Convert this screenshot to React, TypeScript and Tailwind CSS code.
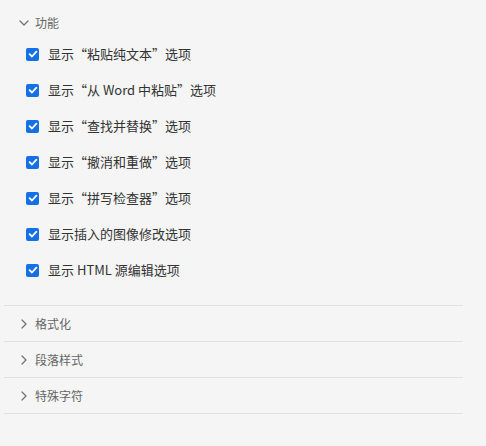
import { ChevronDown, ChevronRight } from 'lucide-react'

const options = [
  '显示“粘贴纯文本”选项',
  '显示“从 Word 中粘贴”选项',
  '显示“查找并替换”选项',
  '显示“撤消和重做”选项',
  '显示“拼写检查器”选项',
  '显示插入的图像修改选项',
  '显示 HTML 源编辑选项',
]

const collapsed = ['格式化', '段落样式', '特殊字符']

function CheckMark() {
  return (
    <span className="flex h-[13px] w-[13px] shrink-0 items-center justify-center rounded-[2px] bg-[#1570e6]">
      <svg width="10" height="10" viewBox="0 0 10 10" fill="none">
        <path
          d="M1.6 5.2 L4 7.5 L8.4 2.6"
          stroke="#fff"
          strokeWidth="1.8"
          strokeLinecap="round"
          strokeLinejoin="round"
        />
      </svg>
    </span>
  )
}

export default function App() {
  return (
    <div
      className="min-h-[446px] w-[486px] bg-[#f5f5f5] pt-[6px]"
      style={{ fontFamily: '"Noto Sans CJK SC", "Noto Sans", sans-serif' }}
    >
      <div className="ml-1 w-[459px]">
        <section className="border-b border-[#e1e1e1] pb-[17px]">
          <div className="flex h-[30px] items-center pl-[12px] pt-[3px] text-[12px] text-[#666]">
            <ChevronDown size={16} strokeWidth={1.8} className="text-[#707070]" />
            <span className="ml-[3px]">功能</span>
          </div>
          {options.map((label) => (
            <label
              key={label}
              className="flex h-9 items-center pl-[22px] text-[13px] text-[#333]"
            >
              <CheckMark />
              <span className="ml-[9px]">{label}</span>
            </label>
          ))}
        </section>
        {collapsed.map((title) => (
          <section
            key={title}
            className="flex h-9 items-center border-b border-[#e1e1e1] pl-[12px] text-[12px] text-[#666]"
          >
            <ChevronRight size={16} strokeWidth={1.8} className="text-[#707070]" />
            <span className="ml-[3px]">{title}</span>
          </section>
        ))}
      </div>
    </div>
  )
}
